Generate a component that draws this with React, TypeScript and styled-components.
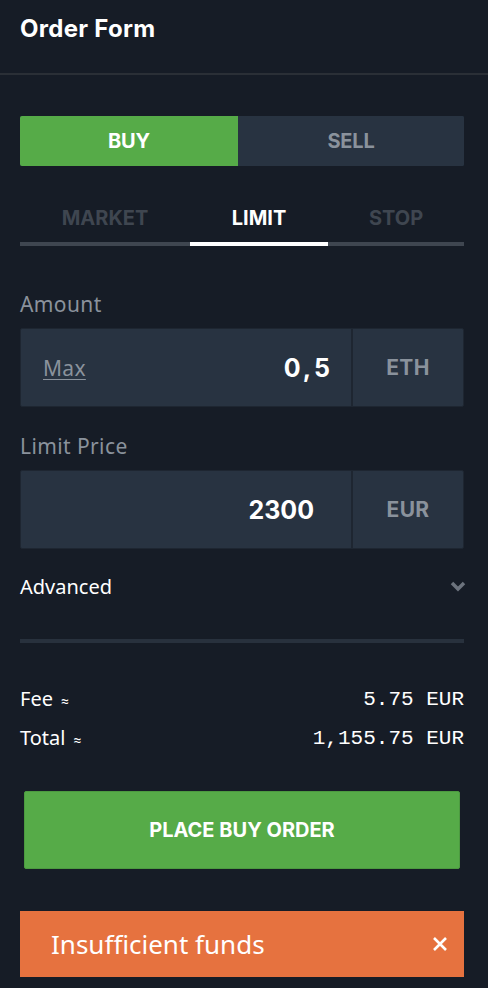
import React from "react";
import styled, { createGlobalStyle } from "styled-components";

const colors = {
  background: "#161c26",
  panel: "#283341",
  panelBorder: "#1e2631",
  divider: "#2a2f36",
  green: "#56ab48",
  orange: "#e6723f",
  muted: "#8a929c",
  dim: "#3f4650",
  white: "#ffffff",
};

const fonts = {
  bold: `Inter, Roboto, sans-serif`,
  text: `"Noto Sans", Roboto, sans-serif`,
  mono: `"Liberation Mono", "DejaVu Sans Mono", monospace`,
};

const GlobalStyle = createGlobalStyle`
  html, body {
    margin: 0;
    padding: 0;
    background: ${colors.background};
  }
  body {
    font-family: ${fonts.text};
    color: ${colors.white};
  }
`;

const Main = styled.div`
  width: 488px;
  min-height: 988px;
  background: ${colors.background};
  display: flex;
  flex-direction: column;
`;

const Header = styled.div`
  height: 73px;
  padding: 0 20px;
  display: flex;
  align-items: flex-start;
  border-bottom: 2px solid ${colors.divider};
  h1 {
    margin: 14px 0 0;
    font-family: ${fonts.bold};
    font-size: 24px;
    font-weight: 700;
    letter-spacing: 0.3px;
  }
`;

const Body = styled.div`
  padding: 41px 24px 0 20px;
  display: flex;
  flex-direction: column;
`;

const SideToggle = styled.div`
  display: grid;
  grid-template-columns: 218px 1fr;
  height: 50px;
  border-radius: 2px;
  overflow: hidden;
  background: ${colors.panel};
`;

const SideButton = styled.button<{ active?: boolean }>`
  border: none;
  margin: 0;
  padding: 0;
  font-family: ${fonts.bold};
  font-size: 20px;
  font-weight: 700;
  letter-spacing: -0.2px;
  background: ${(p) => (p.active ? colors.green : colors.panel)};
  color: ${(p) => (p.active ? colors.white : colors.muted)};
`;

const Tabs = styled.div`
  margin-top: 24px;
  display: grid;
  grid-template-columns: 170px 138px 1fr;
`;

const Tab = styled.div<{ active?: boolean }>`
  height: 56px;
  display: flex;
  justify-content: center;
  padding-top: 16px;
  box-sizing: border-box;
  font-family: ${fonts.bold};
  font-size: 20px;
  font-weight: 700;
  letter-spacing: 0;
  color: ${(p) => (p.active ? colors.white : colors.dim)};
  border-bottom: 4px solid ${(p) => (p.active ? colors.white : colors.dim)};
`;

const FieldLabel = styled.label<{ first?: boolean }>`
  display: block;
  margin-top: ${(p) => (p.first ? "46px" : "27px")};
  font-family: ${fonts.text};
  font-size: 21px;
  font-weight: 400;
  letter-spacing: 0.4px;
  color: ${colors.muted};
  line-height: 24px;
`;

const InputBox = styled.div`
  margin-top: 12px;
  height: 79px;
  display: grid;
  grid-template-columns: 1fr 110px;
  background: ${colors.panel};
  border: 1px solid ${colors.panelBorder};
  border-radius: 2px;
  box-sizing: border-box;
`;

const InputMain = styled.div<{ padRight: number }>`
  display: flex;
  align-items: center;
  justify-content: space-between;
  padding: 0 ${(p) => p.padRight}px 0 22px;
  border-right: 2px solid ${colors.panelBorder};
`;

const MaxLink = styled.span`
  font-family: ${fonts.text};
  font-size: 21px;
  letter-spacing: 0.3px;
  color: ${colors.muted};
  text-decoration: underline;
  text-decoration-thickness: 1px;
  text-underline-offset: 3px;
`;

const Value = styled.span<{ spaced?: boolean }>`
  margin-left: auto;
  font-family: ${fonts.bold};
  font-size: 25px;
  font-weight: 700;
  color: ${colors.white};
  letter-spacing: ${(p) => (p.spaced ? "3px" : "0")};
`;

const Unit = styled.div`
  display: flex;
  align-items: center;
  justify-content: center;
  font-family: ${fonts.bold};
  font-size: 21px;
  font-weight: 700;
  letter-spacing: 0.3px;
  color: ${colors.muted};
`;

const AdvancedRow = styled.div`
  margin-top: 24px;
  display: flex;
  align-items: center;
  justify-content: space-between;
  font-family: ${fonts.text};
  font-size: 20px;
  color: ${colors.white};
  height: 26px;
  svg {
    margin-right: -2px;
  }
`;

const Rule = styled.div`
  margin-top: 40px;
  height: 4px;
  background: #28313d;
`;

const Summary = styled.div`
  margin-top: 44px;
  display: flex;
  flex-direction: column;
  gap: 13px;
`;

const SummaryLine = styled.div`
  display: flex;
  justify-content: space-between;
  align-items: center;
  line-height: 24px;
`;

const SummaryLabel = styled.span`
  font-family: ${fonts.text};
  font-size: 20px;
  color: ${colors.white};
  small {
    font-size: 14px;
    margin-left: 8px;
  }
`;

const SummaryValue = styled.span`
  font-family: ${fonts.mono};
  font-size: 21px;
  color: ${colors.white};
`;

const PlaceOrder = styled.button`
  margin: 39px 4px 0;
  height: 78px;
  border: 1px solid #4c9a40;
  border-radius: 2px;
  background: ${colors.green};
  color: ${colors.white};
  font-family: ${fonts.bold};
  font-size: 20px;
  font-weight: 700;
  letter-spacing: 0;
`;

const Alert = styled.div`
  margin-top: 42px;
  height: 66px;
  background: ${colors.orange};
  display: flex;
  align-items: center;
  justify-content: space-between;
  padding: 0 16px 0 31px;
  font-family: ${fonts.text};
  font-size: 26px;
  color: ${colors.white};
`;

export default function App() {
  return (
    <Main>
      <GlobalStyle />
      <Header>
        <h1>Order Form</h1>
      </Header>
      <Body>
        <SideToggle>
          <SideButton active>BUY</SideButton>
          <SideButton>SELL</SideButton>
        </SideToggle>
        <Tabs>
          <Tab>MARKET</Tab>
          <Tab active>LIMIT</Tab>
          <Tab>STOP</Tab>
        </Tabs>

        <FieldLabel first>Amount</FieldLabel>
        <InputBox>
          <InputMain padRight={18}>
            <MaxLink>Max</MaxLink>
            <Value spaced>0,5</Value>
          </InputMain>
          <Unit>ETH</Unit>
        </InputBox>

        <FieldLabel>Limit Price</FieldLabel>
        <InputBox>
          <InputMain padRight={37}>
            <Value>2300</Value>
          </InputMain>
          <Unit>EUR</Unit>
        </InputBox>

        <AdvancedRow>
          <span>Advanced</span>
          <svg width="16" height="12" viewBox="0 0 16 12">
            <path
              d="M2 3 L8 9 L14 3"
              fill="none"
              stroke="#6c737d"
              strokeWidth="3.5"
            />
          </svg>
        </AdvancedRow>

        <Rule />

        <Summary>
          <SummaryLine>
            <SummaryLabel>
              Fee<small>≈</small>
            </SummaryLabel>
            <SummaryValue>5.75 EUR</SummaryValue>
          </SummaryLine>
          <SummaryLine>
            <SummaryLabel>
              Total<small>≈</small>
            </SummaryLabel>
            <SummaryValue>1,155.75 EUR</SummaryValue>
          </SummaryLine>
        </Summary>

        <PlaceOrder>PLACE BUY ORDER</PlaceOrder>

        <Alert>
          <span>Insufficient funds</span>
          <svg width="16" height="16" viewBox="0 0 16 16">
            <path
              d="M2 2 L14 14 M14 2 L2 14"
              stroke="#ffffff"
              strokeWidth="2.6"
            />
          </svg>
        </Alert>
      </Body>
    </Main>
  );
}
